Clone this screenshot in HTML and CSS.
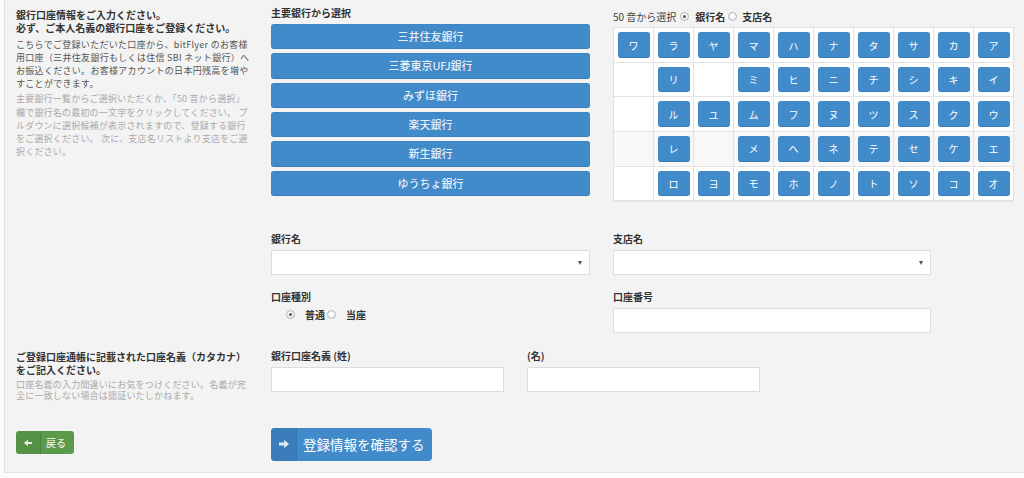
FILE: index.html
```html
<!DOCTYPE html>
<html lang="ja">
<head>
<meta charset="utf-8">
<title>銀行口座情報</title>
<link rel="stylesheet" href="styles.css">
</head>
<body>
<div class="panel">
  <div class="row top">
    <div class="c1 intro">
      <p class="lead">銀行口座情報をご入力ください。<br>必ず、ご本人名義の銀行口座をご登録ください。</p>
      <p class="body">こちらでご登録いただいた口座から、bitFlyer のお客様<br>用口座（三井住友銀行もしくは住信 SBI ネット銀行）へ<br>お振込ください。お客様アカウントの日本円残高を増や<br>すことができます。</p>
      <p class="note">主要銀行一覧からご選択いただくか、「50 音から選択」<br>欄で銀行名の最初の一文字をクリックしてください。 プ<br>ルダウンに選択候補が表示されますので、登録する銀行<br>をご選択ください。 次に、支店名リストより支店をご選<br>択ください。</p>
    </div>
    <div class="c2 banks">
      <div class="label">主要銀行から選択</div>
      <div class="bank-list">
        <button class="bank">三井住友銀行</button>
        <button class="bank">三菱東京UFJ銀行</button>
        <button class="bank">みずほ銀行</button>
        <button class="bank">楽天銀行</button>
        <button class="bank">新生銀行</button>
        <button class="bank">ゆうちょ銀行</button>
      </div>
    </div>
    <div class="c3 kana">
      <div class="kana-head">
        <span class="plain">50 音から選択</span>
        <span class="radio on"></span><span class="bold">銀行名</span>
        <span class="radio"></span><span class="bold">支店名</span>
      </div>
      <table class="kana-table">
        <tr><td><span class="k">ワ</span></td><td><span class="k">ラ</span></td><td><span class="k">ヤ</span></td><td><span class="k">マ</span></td><td><span class="k">ハ</span></td><td><span class="k">ナ</span></td><td><span class="k">タ</span></td><td><span class="k">サ</span></td><td><span class="k">カ</span></td><td><span class="k">ア</span></td></tr>
        <tr><td></td><td><span class="k">リ</span></td><td></td><td><span class="k">ミ</span></td><td><span class="k">ヒ</span></td><td><span class="k">ニ</span></td><td><span class="k">チ</span></td><td><span class="k">シ</span></td><td><span class="k">キ</span></td><td><span class="k">イ</span></td></tr>
        <tr><td></td><td><span class="k">ル</span></td><td><span class="k">ユ</span></td><td><span class="k">ム</span></td><td><span class="k">フ</span></td><td><span class="k">ヌ</span></td><td><span class="k">ツ</span></td><td><span class="k">ス</span></td><td><span class="k">ク</span></td><td><span class="k">ウ</span></td></tr>
        <tr class="shade"><td></td><td><span class="k">レ</span></td><td></td><td><span class="k">メ</span></td><td><span class="k">ヘ</span></td><td><span class="k">ネ</span></td><td><span class="k">テ</span></td><td><span class="k">セ</span></td><td><span class="k">ケ</span></td><td><span class="k">エ</span></td></tr>
        <tr><td></td><td><span class="k">ロ</span></td><td><span class="k">ヨ</span></td><td><span class="k">モ</span></td><td><span class="k">ホ</span></td><td><span class="k">ノ</span></td><td><span class="k">ト</span></td><td><span class="k">ソ</span></td><td><span class="k">コ</span></td><td><span class="k">オ</span></td></tr>
      </table>
    </div>
  </div>

  <div class="row row-a">
    <div class="c1"></div>
    <div class="c2">
      <div class="label">銀行名</div>
      <div class="select"><span class="caret"></span></div>
    </div>
    <div class="c3">
      <div class="label">支店名</div>
      <div class="select w318"><span class="caret"></span></div>
    </div>
  </div>

  <div class="row row-b">
    <div class="c1"></div>
    <div class="c2">
      <div class="label">口座種別</div>
      <div class="radios">
        <span class="radio on"></span><span class="rlabel first">普通</span>
        <span class="radio"></span><span class="rlabel">当座</span>
      </div>
    </div>
    <div class="c3">
      <div class="label">口座番号</div>
      <div class="input w318"></div>
    </div>
  </div>

  <div class="row row-c">
    <div class="c1 holder">
      <p class="lead2">ご登録口座通帳に記載された口座名義（カタカナ）<br>をご記入ください。</p>
      <p class="note2">口座名義の入力間違いにお気をつけください。名義が完<br>全に一致しない場合は認証いたしかねます。</p>
    </div>
    <div class="c2n">
      <div class="label">銀行口座名義 (姓)</div>
      <div class="input w233"></div>
    </div>
    <div class="c3n">
      <div class="label">(名)</div>
      <div class="input w233"></div>
    </div>
  </div>

  <div class="row row-d">
    <div class="c1">
      <button class="btn-back">
        <span class="ico"><svg width="8" height="8" viewBox="0 0 10 10"><path d="M10 3.6H4.8V0.8L0 5 4.8 9.2V6.4H10Z" fill="#e6efe2"/></svg></span>
        <span class="txt">戻る</span>
      </button>
    </div>
    <div class="c2">
      <button class="btn-go">
        <span class="ico"><svg width="10" height="10" viewBox="0 0 10 10"><path d="M0 3.6H5.2V0.8L10 5 5.2 9.2V6.4H0Z" fill="#dfe9f3"/></svg></span>
        <span class="txt">登録情報を確認する</span>
      </button>
    </div>
  </div>
</div>
</body>
</html>
```

FILE: styles.css
```css
* { box-sizing: border-box; }
html, body { margin: 0; padding: 0; background: #fbfbfb; }
body {
  font-family: "Noto Sans CJK JP", "Noto Sans", sans-serif;
  color: #333;
  overflow: hidden;
}
p { margin: 0; }
button { font-family: inherit; margin: 0; cursor: pointer; }

.panel {
  margin-left: 4px;
  height: 473px;
  background: #f3f3f3;
  border-left: 1px solid #e1e1e1;
  border-bottom: 1px solid #e4e4e4;
  padding-left: 11px;
}

.row { display: flex; align-items: flex-start; }
.c1 { flex: none; width: 255px; padding-right: 16px; }
.c2 { flex: none; width: 342px; padding-right: 23px; }
.c3 { flex: none; width: 401px; }
.c2n { flex: none; width: 256px; }
.c3n { flex: none; width: 240px; }

/* intro text */
.intro { padding-top: 7.5px; white-space: nowrap; }
.lead { font-size: 10px; font-weight: bold; line-height: 13px; color: #333; }
.body { font-size: 9px; line-height: 13.3px; color: #555; margin-top: 4px; letter-spacing: 0.3px; }
.note { font-size: 9px; line-height: 13.3px; color: #aaa; margin-top: 1.6px; letter-spacing: 0.2px; }

.label { font-size: 10px; font-weight: bold; line-height: 14px; color: #333; margin-bottom: 4px; }

/* bank buttons */
.banks { padding-top: 6px; }
.bank-list { display: flex; flex-direction: column; gap: 4px; }
.bank {
  width: 319px;
  height: 25.33px;
  background: #428bca;
  border: 1px solid #3f86c4;
  border-bottom-color: #3a7db8;
  border-radius: 3px;
  color: #fff;
  font-size: 11px;
  line-height: 1;
  padding: 0;
}

/* kana */
.kana { padding-top: 9px; }
.kana-head { display: flex; align-items: center; height: 14px; font-size: 10px; margin-bottom: 4.3px; }
.kana-head .plain { color: #444; margin-right: 4px; }
.kana-head .bold { font-weight: bold; color: #333; margin-left: 6px; margin-right: 3px; }
.kana-head .bold:last-child { margin-left: 5px; }

.radio {
  display: inline-block;
  width: 9px; height: 9px;
  border-radius: 50%;
  border: 1px solid #b5b5b5;
  background: radial-gradient(circle at 50% 40%, #fff 0, #e9e9e9 100%);
  position: relative;
  flex: none;
}
.radio.on::after {
  content: "";
  position: absolute;
  left: 2px; top: 2px;
  width: 3px; height: 3px;
  border-radius: 50%;
  background: #555;
}

.kana-table {
  width: 401px;
  table-layout: fixed;
  border-collapse: collapse;
  background: #fff;
  border: 1px solid #dedede;
  box-shadow: 0 1px 1px rgba(0,0,0,.05);
}
.kana-table td {
  border: 1px solid #e2e2e2;
  height: 34.4px;
  padding: 4px 3.5px;
  vertical-align: middle;
}
.kana-table .shade td { background: #f8f8f8; }
.k {
  display: flex;
  align-items: center;
  justify-content: center;
  height: 25.6px;
  background: #428bca;
  border: 1px solid #3f86c4;
  border-bottom-color: #3a7db8;
  border-radius: 3px;
  color: #fff;
  font-size: 10px;
}

/* form */
.row-a { margin-top: 31px; }
.row-b { margin-top: 14.7px; }
.row-c { margin-top: 15.7px; }
.row-d { margin-top: 26.2px; }

.select, .input {
  height: 25px;
  background: #fff;
  border: 1px solid #dcdcdc;
}
.select { width: 319px; position: relative; }
.w318 { width: 318px; }
.w233 { width: 233px; }
.caret {
  position: absolute;
  right: 7px; top: 10px;
  width: 0; height: 0;
  border-left: 2.5px solid transparent;
  border-right: 2.5px solid transparent;
  border-top: 4px solid #555;
}

.radios {
  display: flex;
  align-items: center;
  height: 14px;
  margin-top: 2.7px;
  padding-left: 14.5px;
  font-size: 10px;
  font-weight: bold;
  color: #333;
}
.rlabel { margin-left: 10.5px; }
.rlabel.first { margin-right: 1.5px; }

.holder { padding-top: 1px; white-space: nowrap; }
.lead2 { font-size: 10px; font-weight: bold; line-height: 13px; color: #333; }
.note2 { font-size: 9px; line-height: 11.5px; color: #aaa; margin-top: 3px; letter-spacing: 0.2px; }

/* buttons */
.btn-back {
  display: inline-flex;
  align-items: stretch;
  height: 23.3px;
  padding: 0;
  background: #5a9a4a;
  border: none;
  border-radius: 3px;
  color: #fff;
  font-size: 10px;
}
.btn-back .ico {
  width: 25px;
  display: flex; align-items: center; justify-content: center;
  background: rgba(0,0,0,.05);
  border-right: 1px solid rgba(0,0,0,.1);
  border-radius: 3px 0 0 3px;
}
.btn-back .txt { display: flex; align-items: center; padding: 0 8px 0 5px; }

.btn-go {
  display: inline-flex;
  align-items: stretch;
  width: 161px;
  height: 33px;
  padding: 0;
  background: #428bca;
  border: none;
  border-radius: 4px;
  color: #fff;
  font-size: 13.5px;
}
.btn-go .ico {
  width: 26px;
  display: flex; align-items: center; justify-content: center;
  background: #3a7dba;
  border-right: 1px solid #3674ad;
  border-radius: 4px 0 0 4px;
}
.btn-go .txt { display: flex; align-items: center; padding-left: 6px; }
```
